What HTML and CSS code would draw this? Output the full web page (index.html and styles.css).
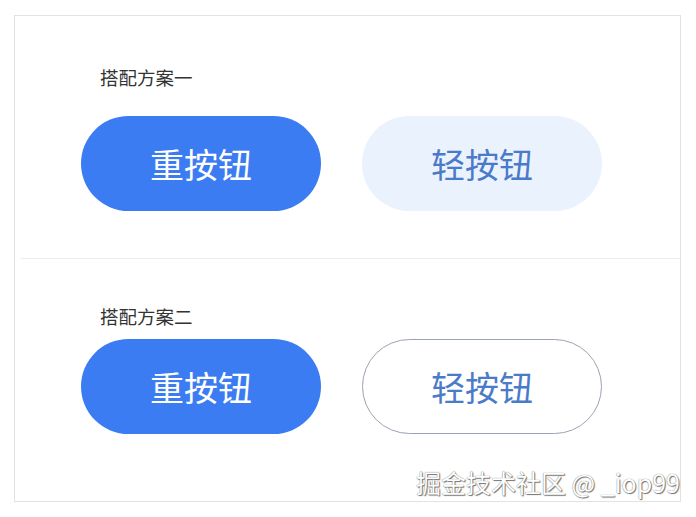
FILE: index.html
```html
<!DOCTYPE html>
<html lang="zh-CN">
  <head>
    <meta charset="UTF-8" />
    <meta name="viewport" content="width=device-width, initial-scale=1.0" />
    <title>按钮搭配</title>
    <link rel="stylesheet" href="styles.css">
  </head>
  <body>
    <div class="frame">
      <div class="scheme scheme-first">
        <div class="label">搭配方案一</div>
        <div class="buttons">
          <button class="btn btn-heavy">重按钮</button>
          <button class="btn btn-light">轻按钮</button>
        </div>
      </div>
      <div class="scheme scheme-second">
        <div class="label">搭配方案二</div>
        <div class="buttons">
          <button class="btn btn-heavy">重按钮</button>
          <button class="btn btn-outline">轻按钮</button>
        </div>
      </div>
      <div class="watermark">掘金技术社区 @ _iop99</div>
    </div>
  </body>
</html>
```

FILE: styles.css
```css
body {
  font-family: "Noto Sans CJK SC", "Noto Sans", sans-serif;
  margin: 0;
  background-color: #fff;
}
.frame {
  position: relative;
  width: 665px;
  height: 485px;
  margin: 15px 0 0 14px;
  border: 1px solid #e2e2e2;
}
.scheme {
  padding-left: 66px;
}
.scheme-first {
  height: 194px;
  padding-top: 48px;
  margin-left: 6px;
  padding-left: 60px;
  border-bottom: 1px solid #ececec;
}
.scheme-second {
  padding-top: 44px;
}
.label {
  font-size: 18.5px;
  line-height: 26px;
  color: #333;
  padding-left: 19px;
}
.scheme-first .buttons {
  margin-top: 26px;
}
.scheme-second .buttons {
  margin-top: 10px;
}
.buttons {
  display: flex;
  gap: 41px;
}
.btn {
  width: 240px;
  height: 95px;
  border-radius: 48px;
  border: none;
  font-family: "Noto Sans CJK SC", sans-serif;
  font-size: 34px;
  padding: 0;
  cursor: pointer;
}
.btn-heavy {
  background-color: #3b7cf3;
  color: #fff;
}
.btn-light {
  background-color: #eaf2fd;
  color: #4a7bc9;
}
.btn-outline {
  background-color: #fff;
  color: #4a7bc9;
  border: 1px solid #9aa3b0;
}
.watermark {
  position: absolute;
  right: 0;
  bottom: 3px;
  font-size: 25px;
  line-height: 32px;
  color: #fff;
  text-shadow: 0 0 1px #555, 1px 1px 1px #777;
}
```
